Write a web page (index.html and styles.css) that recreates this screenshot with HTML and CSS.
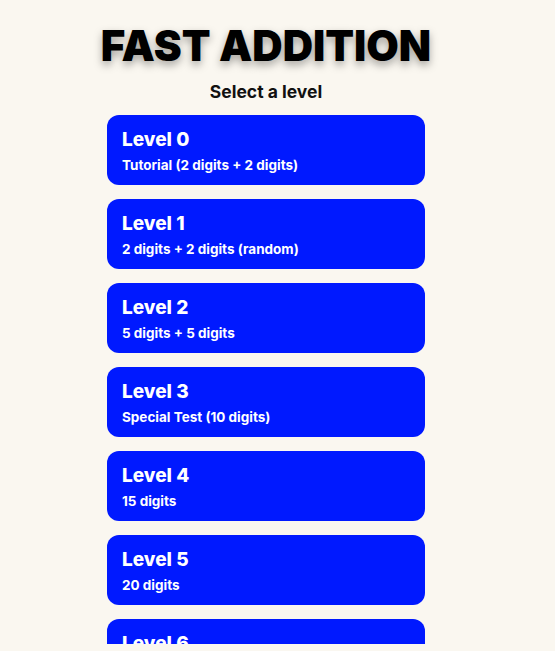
FILE: index.html
```html
<!doctype html>
<html>
	<head>
		<title>Fast Addition</title>
		<link rel="stylesheet" href="styles.css">
	</head>
	<body>
		<div class="app">
			<h1 class="title">FAST ADDITION</h1>
			<p class="subtitle">Select a level</p>

			<ul class="levels">
				<li class="level">
					<h2>Level 0</h2>
					<p>Tutorial (2 digits + 2 digits)</p>
				</li>
				<li class="level">
					<h2>Level 1</h2>
					<p>2 digits + 2 digits (random)</p>
				</li>
				<li class="level">
					<h2>Level 2</h2>
					<p>5 digits + 5 digits</p>
				</li>
				<li class="level">
					<h2>Level 3</h2>
					<p>Special Test (10 digits)</p>
				</li>
				<li class="level">
					<h2>Level 4</h2>
					<p>15 digits</p>
				</li>
				<li class="level">
					<h2>Level 5</h2>
					<p>20 digits</p>
				</li>
				<li class="level">
					<h2>Level 6</h2>
					<p>30 digits</p>
				</li>
				<li class="level">
					<h2>Level 7</h2>
					<p>50 digits</p>
				</li>
			</ul>
		</div>
	</body>
</html>
```

FILE: styles.css
```css
html, body {
	margin: 0;
	padding: 0;
	background-color: #faf7f0;
	font-family: Inter, "Noto Sans", sans-serif;
	color: #111;
}

.app {
	width: 532px;
	height: 644px;
	overflow: hidden;
	display: flex;
	flex-direction: column;
	align-items: center;
}

.title {
	margin: 20px 0 0;
	font-size: 42px;
	font-weight: 900;
	color: #000;
	text-shadow: 0 4px 8px rgba(0, 0, 0, 0.35);
}

.subtitle {
	margin: 10px 0 0;
	font-size: 17.5px;
	font-weight: 700;
}

.levels {
	list-style: none;
	margin: 13px 0 0;
	padding: 0;
	width: 318px;
	display: flex;
	flex-direction: column;
	gap: 14px;
}

.level {
	background-color: #0019ff;
	color: white;
	border-radius: 12px;
	padding: 13px 15px 12px;
	cursor: pointer;
}

.level h2 {
	margin: 0;
	font-size: 19px;
	font-weight: 800;
}

.level p {
	margin: 6px 0 0;
	font-size: 13.5px;
	font-weight: 700;
}
```
